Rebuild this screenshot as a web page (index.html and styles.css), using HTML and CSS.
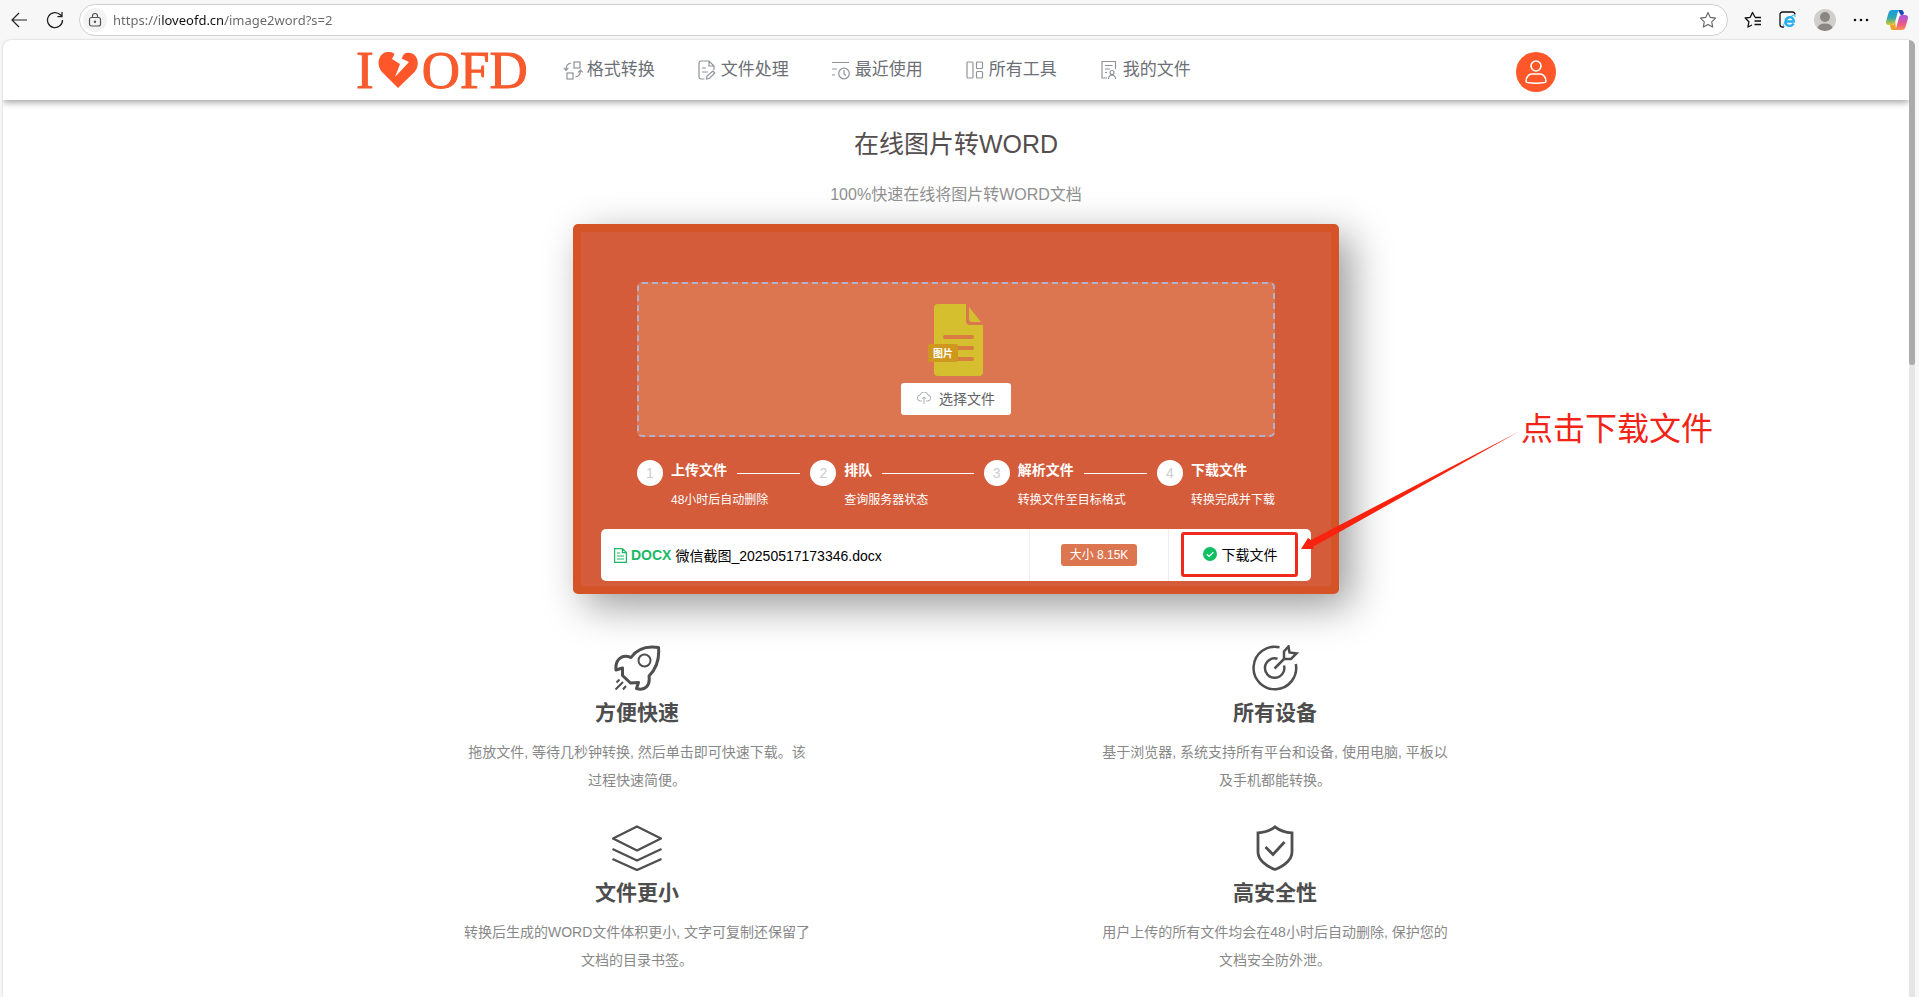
FILE: index.html
```html
<!DOCTYPE html>
<html lang="zh-CN">
<head>
    <meta charset="UTF-8">
    <meta name="viewport" content="width=device-width, initial-scale=1.0">
    <title>在线图片转WORD</title>
    <link rel="stylesheet" href="styles.css">
</head>
<body>

<div class="toolbar">
    <button class="tool-btn" aria-label="返回">
        <svg width="18" height="18" viewBox="0 0 18 18" fill="none" stroke="#222" stroke-width="1.2"><path d="M17 9H2M9 2L2 9l7 7"/></svg>
    </button>
    <button class="tool-btn" aria-label="刷新">
        <svg width="18" height="18" viewBox="0 0 18 18" fill="none" stroke="#222" stroke-width="1.3"><path d="M16.500 9A7.500 7.500 0 1 1 14.500 4L16 5.500M16 1v4.600h-4.600"/></svg>
    </button>
    <div class="address">
        <span class="lock">
            <svg width="14" height="16" viewBox="0 0 14 16" fill="none" stroke="#555" stroke-width="1.2"><rect x="1.500" y="5.500" width="11" height="8.500" rx="2"/><path d="M4.500 5.500V4a2.500 2.500 0 0 1 5 0v1.500"/><circle cx="7" cy="9.800" r=".6" fill="#555"/></svg>
        </span>
        <input class="url" type="text" aria-label="地址" value="https://iloveofd.cn/image2word?s=2">
        <button class="tool-btn" aria-label="收藏">
            <svg width="18" height="18" viewBox="0 0 18 18" fill="none" stroke="#666" stroke-width="1.1" stroke-linejoin="round"><path d="M9 1.500l2.300 4.900 5.300.7-3.900 3.700 1 5.300L9 13.500l-4.700 2.600 1-5.300L1.400 7.100l5.300-.7z"/></svg>
        </button>
    </div>
    <div class="tools">
        <button class="tool-btn" aria-label="收藏夹">
            <svg width="18" height="18" viewBox="0 0 18 18" fill="none" stroke="#111" stroke-width="1.300" stroke-linejoin="round"><path d="M11 6.300L8.500 1.500 6.200 6.300l-5 .7 3.700 3.700-1 5.300L8 14M11 6.500h6M10.500 10h6.500M10.500 13.500H17"/></svg>
        </button>
        <button class="tool-btn" aria-label="IE 模式">
            <svg width="18" height="18" viewBox="0 0 18 18" fill="none"><path d="M5 16H3.500A2.500 2.500 0 0 1 1 13.500v-10A2.500 2.500 0 0 1 3.500 1h10A2.500 2.500 0 0 1 16 3.500" stroke="#111" stroke-width="1.300"/><path d="M6.500 10.500h8.300c0-6.300-8.300-5.600-8.300.2 0 5 6.500 5.300 8 1.800" stroke="#28aee8" stroke-width="2.300"/><path d="M5.500 15.500C3 17 5 11 10 7s7-3.500 6-1" stroke="#28aee8" stroke-width="1"/></svg>
        </button>
        <button class="tool-btn" aria-label="用户">
            <svg width="22" height="22" viewBox="0 0 22 22"><circle cx="11" cy="11" r="11" fill="#d1cfcc"/><circle cx="11" cy="8" r="5" fill="#8a8683"/><path d="M3.500 19a7.600 5.500 0 0 1 15 0A11 11 0 0 1 3.500 19z" fill="#8a8683"/></svg>
        </button>
        <button class="tool-btn" aria-label="更多">
            <svg width="16" height="4" viewBox="0 0 16 4" fill="#111"><circle cx="2" cy="2" r="1.300"/><circle cx="8" cy="2" r="1.300"/><circle cx="14" cy="2" r="1.300"/></svg>
        </button>
        <button class="tool-btn" aria-label="Copilot">
            <svg width="22" height="20" viewBox="0 0 22 20">
                <defs>
                    <linearGradient id="cool" x1="0" y1="0" x2="0" y2="1"><stop offset="0" stop-color="#1c9be0"/><stop offset=".5" stop-color="#2aa7b0"/><stop offset="1" stop-color="#e6c526"/></linearGradient>
                    <linearGradient id="warm" x1="0" y1="0" x2="0" y2="1"><stop offset="0" stop-color="#a655e8"/><stop offset=".6" stop-color="#ec5a86"/><stop offset="1" stop-color="#fb9450"/></linearGradient>
                </defs>
                <path d="M12 0h3.500c1.500 0 2 1.500 2.500 4l-3 1.500z" fill="#1747b8"/>
                <path d="M6 0h7.500c-1.500 1-2 3-2.800 6L9 12.500C8.500 14 7.500 15 6 15H3c-2.500 0-3.500-1.500-2.800-4L2.500 3C3 1 4.500 0 6 0z" fill="url(#cool)"/>
                <path d="M10 20H6.500C5 20 4.500 18.500 4 15h2.500c1.500 0 2.200-1 2.800-3z" fill="#f0a12a"/>
                <path d="M16 20H8.500c1.500-1 2-3 2.800-6L13 7.500C13.500 6 14.500 5 16 5h3c2.500 0 3.500 1.500 2.800 4L19.500 17c-.5 2-2 3-3.500 3z" fill="url(#warm)"/>
            </svg>
        </button>
    </div>
</div>

<div class="window">
    <div class="page">
        <header class="header">
            <div class="header-inner">
                <a class="logo" href="#" aria-label="I love OFD">
                    <span>I</span>
                    <svg class="heart" width="40" height="36" viewBox="0 0 40 36"><path d="M20 36L4 20C-1.500 14 0 4 6 1c4-2 8.500-1 10.500 1L14 7l8 5-5 13 14-15-7.500-3.500L26 2c3.500-2 8-1.500 11 1.500 4 4.500 3.500 12-.5 16.500z" fill="#ff5729"/></svg>
                    <span>OFD</span>
                </a>
                <nav class="nav">
                    <a href="#">
                        <svg class="nav-icon" viewBox="0 0 20 20"><rect x="11" y="2" width="6" height="6"/><rect x="4" y="13" width="6" height="6"/><path d="M8 3C4.500 3.500 3 6 3 10M.8 7.800L3 10.300 5.300 8M12.500 17c3.500-.5 5-3 5-6.500M15.200 12.500l2.300-2.400 2.200 2.300"/></svg>
                        格式转换</a>
                    <a href="#">
                        <svg class="nav-icon" viewBox="0 0 20 20"><path d="M7.500 19H4a2 2 0 0 1-2-2V3a2 2 0 0 1 2-2h8l5 5v4M12 1v5h5M5 8h4M5 12h6M9.500 19l.5-3 6-5 1.800 2-5.500 5.500z"/></svg>
                        文件处理</a>
                    <a href="#">
                        <svg class="nav-icon" viewBox="0 0 20 20"><path d="M1 2.500h17M1 9h5M1 15h3"/><circle cx="13" cy="13.500" r="5.300"/><path d="M13 10v4l2 1.500"/></svg>
                        最近使用</a>
                    <a href="#">
                        <svg class="nav-icon" viewBox="0 0 20 20"><rect x="2" y="2" width="6" height="16" rx="1"/><rect x="11.500" y="2" width="6" height="6.500" rx="1"/><rect x="11.500" y="11.500" width="6" height="6.500" rx="1"/></svg>
                        所有工具</a>
                    <a href="#">
                        <svg class="nav-icon" viewBox="0 0 20 20"><path d="M8 18H3V1.500h13.500V9M6 5.500h7.500M6 9h5M6 12.500h2"/><circle cx="13" cy="12.500" r="2"/><path d="M9.500 19c0-5 7-5 7 0"/></svg>
                        我的文件</a>
                </nav>
                <button class="avatar" aria-label="我的账户">
                    <svg width="22" height="24" viewBox="0 0 22 24" fill="none" stroke="#fff" stroke-width="1.600"><circle cx="11" cy="6" r="5"/><path d="M7 14h8c3.500 0 6 3.500 6 7 0 .8-.5 1.300-1.500 1.500-5 .8-12 .8-17 0C1.500 22.300 1 21.800 1 21c0-3.500 2.500-7 6-7z"/></svg>
                </button>
            </div>
        </header>

        <main>
            <h1>在线图片转WORD</h1>
            <p class="subtitle">100%快速在线将图片转WORD文档</p>

            <section class="card">
                <div class="card-body">
                    <div class="dropzone">
                        <svg class="doc" width="56" height="73" viewBox="0 0 56 73">
                            <path d="M10 0h28v17a4 4 0 0 0 4 4h13v47a4 4 0 0 1-4 4H10a4 4 0 0 1-4-4V4a4 4 0 0 1 4-4z" fill="#d5bf2e"/>
                            <path d="M41 3l12 15h-9a3 3 0 0 1-3-3z" fill="#d5bf2e"/>
                            <path d="M17 33h27M17 44h27M17 55h27" stroke="#d97c42" stroke-width="4" stroke-linecap="round"/>
                            <rect y="40" width="30" height="18" rx="2" fill="#d0971f"/>
                            <text class="doc-label" x="15" y="53" text-anchor="middle">图片</text>
                        </svg>
                        <button class="choose">
                            <svg width="14" height="12" viewBox="0 0 14 12" fill="none" stroke="#a8abb2"><path d="M5 9H3.500a3 3 0 0 1-.3-6A4 4 0 0 1 11 3a3 3 0 0 1-.5 6H9M7 12V5M4.800 7L7 4.800 9.200 7"/></svg>
                            选择文件
                        </button>
                    </div>

                    <ol class="steps">
                        <li>
                            <span class="num">1</span>
                            <div class="step-text">
                                <h3>上传文件</h3>
                                <p>48小时后自动删除</p>
                            </div>
                        </li>
                        <li>
                            <span class="num">2</span>
                            <div class="step-text">
                                <h3>排队</h3>
                                <p>查询服务器状态</p>
                            </div>
                        </li>
                        <li>
                            <span class="num">3</span>
                            <div class="step-text">
                                <h3>解析文件</h3>
                                <p>转换文件至目标格式</p>
                            </div>
                        </li>
                        <li>
                            <span class="num">4</span>
                            <div class="step-text">
                                <h3>下载文件</h3>
                                <p>转换完成并下载</p>
                            </div>
                        </li>
                    </ol>
                </div>

                <div class="file-row">
                    <div class="file-name">
                        <svg width="13" height="15" viewBox="0 0 13 15" fill="none" stroke="#1bb866" stroke-width="1.200"><path d="M.6.600h7.800l4 4v9.800H.6zM8.400.600v4h4M3 5h3M3 8h7M3 11h7"/></svg>
                        <b>DOCX</b>
                        <span>微信截图_20250517173346.docx</span>
                    </div>
                    <div class="file-size"><span class="tag">大小 8.15K</span></div>
                    <div class="file-action">
                        <button class="download">
                            <svg width="14" height="14" viewBox="0 0 14 14"><circle cx="7" cy="7" r="7" fill="#0fbf62"/><path d="M3.800 7.200l2.300 2.200 4.200-4.200" fill="none" stroke="#fff" stroke-width="1.300"/></svg>
                            下载文件
                        </button>
                        <span class="mark-box"></span>
                    </div>
                </div>

                <div class="mark">
                    <svg width="220" height="120" viewBox="0 0 220 120"><path d="M219 0L10 109l-3-2-7 11h13l-1-2.500 6-3z" fill="#f8230f"/></svg>
                    <span>点击下载文件</span>
                </div>
            </section>

            <section class="features">
                <article>
                    <svg width="50" height="46" viewBox="0 0 50 46" fill="none" stroke="#4f4f4f" stroke-width="3" stroke-linejoin="round"><path d="M46.500 2.500C34 .5 25 4 19 12.500 10 9 3 14 4 25l6.500-2v7.500l8 7.500 8-.5-2 6C33 46 38.500 41 37 31 45 23 47.500 13 46.500 2.500z"/><circle cx="32.500" cy="15.500" r="6" stroke-width="2"/><path d="M7.500 34.500l-3 3M11 37l-7.500 7.500M14 41l-3 3.500" stroke-width="2"/></svg>
                    <h2>方便快速</h2>
                    <p>拖放文件, 等待几秒钟转换, 然后单击即可快速下载。该过程快速简便。</p>
                </article>
                <article>
                    <svg width="50" height="46" viewBox="0 0 50 46" fill="none" stroke="#4f4f4f" stroke-width="2.500"><path d="M29.500 2.200A21.300 21.300 0 1 0 45.800 19"/><path d="M27.500 13.800A9.700 9.700 0 1 0 34 20.500"/><path d="M24.500 23.500L34 14M34 14V6.500l4.500-5 1 6 7 1-5.500 5.500z"/></svg>
                    <h2>所有设备</h2>
                    <p>基于浏览器, 系统支持所有平台和设备, 使用电脑, 平板以及手机都能转换。</p>
                </article>
                <article>
                    <svg width="50" height="46" viewBox="0 0 50 46" fill="none" stroke="#4f4f4f" stroke-width="2.300" stroke-linejoin="round"><path d="M25 1.500L49 13.500 25 25.500 1 13.500z"/><path d="M.5 24L25 35.500 49.500 24M.5 34L25 45 49.500 34"/></svg>
                    <h2>文件更小</h2>
                    <p>转换后生成的WORD文件体积更小, 文字可复制还保留了文档的目录书签。</p>
                </article>
                <article>
                    <svg width="50" height="46" viewBox="0 0 50 46" fill="none" stroke="#4f4f4f" stroke-width="2.800"><path d="M25 1.800c-5 4-10 5.700-17 6V27c0 7 7 14 17 17.500C35 41 42 34 42 27V7.800c-7-.3-12-2-17-6z"/><path d="M15.500 22l7.500 7.500 11.500-12.500"/></svg>
                    <h2>高安全性</h2>
                    <p>用户上传的所有文件均会在48小时后自动删除, 保护您的文档安全防外泄。</p>
                </article>
            </section>
        </main>
    </div>
    <div class="scrollbar"><div class="thumb"></div></div>
</div>

</body>
</html>
```

FILE: styles.css
```css
* {
    box-sizing: border-box;
}
body {
    margin: 0;
    height: 100vh;
    overflow: hidden;
    display: flex;
    flex-direction: column;
    background-color: #f7f7f7;
    font-family: "Liberation Sans", "Noto Sans CJK SC", sans-serif;
    font-size: 14px;
}
h1, h2, h3, p, ol {
    margin: 0;
    padding: 0;
}
button {
    font-family: inherit;
    font-size: 14px;
    border: none;
    background: none;
    padding: 0;
    cursor: pointer;
}
a {
    text-decoration: none;
}

/* browser bar */
.toolbar {
    flex: none;
    height: 40px;
    padding: 0 11px 0 10px;
    display: flex;
    align-items: center;
    gap: 18px;
}
.tool-btn {
    display: flex;
    align-items: center;
    justify-content: center;
}
.address {
    flex: 1;
    height: 32px;
    margin: 0 -2px 0 -3px;
    padding: 0 10px 0 3px;
    display: flex;
    align-items: center;
    gap: 6px;
    background-color: #fff;
    border: 1px solid #cfcfcf;
    border-radius: 16px;
}
.lock {
    width: 24px;
    height: 24px;
    display: flex;
    align-items: center;
    justify-content: center;
    background-color: #f3f3f3;
    border-radius: 50%;
}
/* the domain part of the address is darker */
.url {
    flex: 1;
    border: none;
    outline: none;
    padding: 0;
    font-family: "Noto Sans", sans-serif;
    font-size: 13px;
    color: transparent;
    background: linear-gradient(90deg, #666 48px, #111 48px, #111 112px, #666 112px);
    -webkit-background-clip: text;
    background-clip: text;
}
.tools {
    display: flex;
    align-items: center;
    gap: 17px;
}

/* window */
.window {
    flex: 1;
    min-height: 0;
    display: flex;
    padding: 0 4px 0 3px;
}
.page {
    flex: 1;
    overflow: hidden;
    background-color: #fff;
    border-radius: 8px 0 0 0;
    box-shadow: 0 0 2px rgba(0, 0, 0, 0.25);
}
.scrollbar {
    width: 6px;
    background-color: #e6e6e6;
    border-radius: 0 6px 0 0;
}
.thumb {
    height: 34%;
    background-color: #ababab;
    border-radius: 0 6px 3px 3px;
}

/* header */
.header {
    height: 60px;
    box-shadow: 0 2px 7px rgba(0, 0, 0, 0.4);
}
.header-inner {
    max-width: 1200px;
    height: 60px;
    margin: 0 auto;
    display: flex;
    align-items: center;
}
.logo {
    display: flex;
    align-items: center;
    gap: 4px;
    font-family: "Liberation Serif", serif;
    font-size: 53px;
    line-height: 60px;
    color: #f75a2c;
    -webkit-text-stroke: 1px #f75a2c;
}
.nav {
    flex: 1;
    display: flex;
    gap: 42px;
    margin-left: 35px;
}
.nav a {
    display: flex;
    align-items: center;
    gap: 4px;
    font-size: 17px;
    line-height: 24px;
    color: #6c6f75;
}
.nav-icon {
    width: 20px;
    height: 20px;
    fill: none;
    stroke: #909399;
    stroke-width: 1.2;
}
.avatar {
    width: 40px;
    height: 40px;
    margin-top: 4px;
    display: flex;
    align-items: center;
    justify-content: center;
    background-color: #ff5729;
    border-radius: 50%;
}

/* title */
h1 {
    margin-top: 29px;
    font-size: 25px;
    line-height: 30px;
    font-weight: 400;
    text-align: center;
    color: #554e4e;
}
.subtitle {
    margin-top: 24px;
    font-size: 16px;
    line-height: 24px;
    text-align: center;
    color: #909090;
}

/* convert card */
.card {
    position: relative;
    max-width: 766px;
    margin: 17px auto 0;
    padding: 50px 20px 5px;
    background-color: #d45c3b;
    border: 8px solid #d45327;
    border-radius: 5px;
    box-shadow: 12px 12px 40px rgba(0, 0, 0, 0.4);
}
.card-body {
    padding: 0 36px;
}
.dropzone {
    padding: 20px;
    display: flex;
    flex-direction: column;
    align-items: center;
    gap: 6px;
    background-color: #dc7650;
    border: 2px dashed #b3b0cc;
    border-radius: 5px;
}
.doc-label {
    font-size: 10px;
    font-weight: bold;
    fill: #fff;
}
.choose {
    width: 110px;
    height: 32px;
    padding-bottom: 2px;
    display: flex;
    align-items: center;
    justify-content: center;
    gap: 8px;
    background-color: #fff;
    border-radius: 3px;
    color: #606266;
}
.steps {
    margin-top: 23px;
    display: flex;
    gap: 10px;
    list-style: none;
    color: #fff;
}
.steps li {
    flex: 1;
    display: flex;
    gap: 8px;
}
.steps li:last-child {
    flex: none;
}
.num {
    flex: none;
    width: 26px;
    height: 26px;
    line-height: 26px;
    text-align: center;
    background-color: #fff;
    border-radius: 50%;
    color: #ccc;
}
.step-text {
    flex: 1;
    white-space: nowrap;
}
.steps h3 {
    display: flex;
    align-items: center;
    gap: 10px;
    font-size: 14px;
    line-height: 20px;
}
.steps li:not(:last-child) h3::after {
    content: "";
    flex: 1;
    height: 1px;
    margin-top: 6px;
    background-color: #fff;
}
.steps p {
    margin-top: 12px;
    font-size: 12px;
    line-height: 16px;
}
.file-row {
    height: 52px;
    margin-top: 21px;
    display: flex;
    background-color: #fff;
    border-radius: 5px;
}
.file-row > div {
    display: flex;
    align-items: center;
}
.file-name {
    flex: 1;
    padding-left: 13px;
    gap: 4px;
}
.file-name b {
    color: #1bb866;
}
.file-size {
    width: 140px;
    justify-content: center;
    border-left: 1px solid #eee;
    border-right: 1px solid #eee;
}
.tag {
    padding: 0 9px;
    font-size: 12px;
    line-height: 22px;
    background-color: #dc7650;
    border-radius: 3px;
    color: #fff;
}
.file-action {
    position: relative;
    width: 142px;
    justify-content: center;
}
.download {
    padding-bottom: 2px;
    display: flex;
    align-items: center;
    gap: 5px;
    color: #000;
}

/* red marks over the card */
.mark-box {
    position: absolute;
    inset: 3px 13px 4px 12px;
    border: 3px solid #f0291d;
    border-radius: 3px;
}
.mark {
    position: absolute;
    left: 720px;
    top: 177px;
    display: flex;
    align-items: flex-start;
    white-space: nowrap;
    font-size: 32px;
    line-height: 40px;
    color: #f22317;
}
.mark svg {
    margin-top: 22px;
}

/* features */
.features {
    max-width: 1276px;
    margin: 51px auto 0;
    display: grid;
    grid-template-columns: 1fr 1fr;
    row-gap: 31px;
}
.features article {
    display: flex;
    flex-direction: column;
    align-items: center;
    text-align: center;
}
.features h2 {
    margin-top: 9px;
    font-size: 21px;
    line-height: 26px;
    color: #4d4d4d;
}
.features p {
    max-width: 350px;
    margin-top: 12px;
    line-height: 28px;
    color: #888;
}
```
